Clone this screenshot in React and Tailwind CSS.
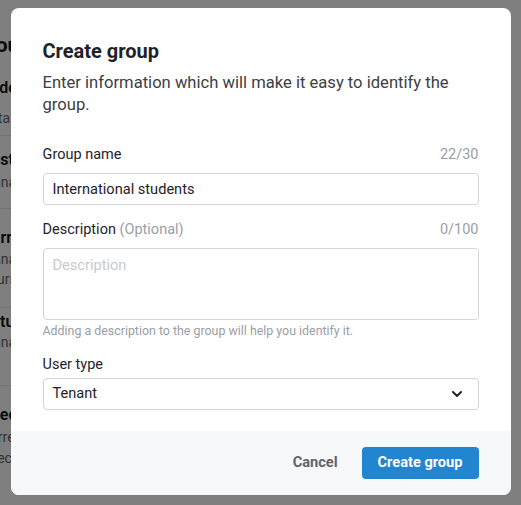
import React, { useState } from 'react';
import { ChevronDown } from 'lucide-react';

// group list on the page behind the dialog
const groups = [
  { name: 'Widespread', lines: ['Data'], box: 'pt-[20px] pb-[8px] gap-[11px]' },
  { name: 'Postgraduates', lines: ['Manager'], box: 'pt-[14px] pb-[17px] gap-[3px]' },
  { name: 'Current', lines: ['Manager', 'Yours'], box: 'pt-[19px] pb-[19px] gap-[2px]' },
  { name: 'Actual', lines: ['Manager'], box: 'pt-[4px] pb-[34px] gap-[1px]' },
  { name: 'Specific', lines: ['Current', 'Specific'], box: 'pt-[19px] gap-[3px] border-b-0' },
];

const Field = ({ label, hint, count, children, help, tight }) => (
  <div className="flex flex-col">
    <div className={`flex items-end justify-between ${tight ? 'mb-[4px]' : 'mb-[9px]'}`}>
      <span className="text-[14.5px] leading-[18px] text-[#1f2328]">
        {label}
        {hint && <span className="text-[#9aa0a6]"> {hint}</span>}
      </span>
      {count && <span className="text-[14.5px] leading-[18px] text-[#9aa0a6]">{count}</span>}
    </div>
    {children}
    {help && <p className="mt-[3px] text-[12.4px] leading-[16px] text-[#9aa0a6]">{help}</p>}
  </div>
);

export default function App() {
  const [name, setName] = useState('International students');
  const [description, setDescription] = useState('');

  return (
    <div
      className="relative w-[521px] h-[505px] overflow-hidden bg-white"
      style={{ fontFamily: 'Roboto, "Liberation Sans", sans-serif' }}
    >
      <div className="-ml-[19px] w-[200px] pt-[32px] flex flex-col text-[#111]">
        <h2 className="-ml-[7px] text-[21px] font-bold leading-[26px]">Groups</h2>
        {groups.map((g) => (
          <div key={g.name} className={`flex flex-col border-b border-[#e6e6e6] ${g.box}`}>
            <p className="text-[16px] font-semibold leading-[20px]">{g.name}</p>
            {g.lines.map((l, j) => (
              <p key={j} className="text-[14px] leading-[18px] text-[#666]">{l}</p>
            ))}
          </div>
        ))}
      </div>

      {/* dimmer + dialog */}
      <div className="absolute inset-0 bg-black/50 flex items-start justify-center pt-[8px]">
        <div className="w-[500px] h-[487px] bg-white rounded-[8px] overflow-hidden flex flex-col">
          <div className="flex-1 px-[32px] pt-[30px]">
            <h1 className="text-[20px] leading-[26px] font-bold text-[#1f2328]">Create group</h1>
            <p className="mt-[8px] text-[16.6px] leading-[22px] text-[#3c4043]">
              Enter information which will make it easy to identify the group.
            </p>

            <div className="mt-[30px] flex flex-col gap-[16px]">
              <Field label="Group name" count={`${name.length}/30`}>
                <input
                  value={name}
                  onChange={(e) => setName(e.target.value)}
                  className="h-[32px] w-full rounded-[4px] border border-[#d4d4d5] px-[9px] text-[14.6px] text-[#1f2328] outline-none"
                />
              </Field>

              <Field
                label="Description"
                hint="(Optional)"
                count={`${description.length}/100`}
                help="Adding a description to the group will help you identify it."
              >
                <textarea
                  value={description}
                  onChange={(e) => setDescription(e.target.value)}
                  placeholder="Description"
                  className="h-[72px] w-full resize-none rounded-[4px] border border-[#d4d4d5] px-[9px] py-[6px] text-[14.6px] leading-[20px] text-[#1f2328] placeholder:text-[#c8cacd] outline-none"
                />
              </Field>

              <div className="mt-[1px]">
                <Field label="User type" tight>
                  <button className="h-[32px] w-full rounded-[4px] border border-[#d4d4d5] px-[9px] flex items-center justify-between text-[14.6px] text-[#1f2328]">
                    <span>Tenant</span>
                    <ChevronDown size={16} strokeWidth={3} className="mr-[4px] text-[#222]" />
                  </button>
                </Field>
              </div>
            </div>
          </div>

          <div className="h-[64px] bg-[#f7f8fa] px-[32px] flex items-center justify-end gap-[24px]">
            <button className="text-[14.6px] font-bold text-[#60646a]">Cancel</button>
            <button className="h-[32px] px-[16px] rounded-[4px] bg-[#2185d0] text-white text-[14.6px] font-bold">
              Create group
            </button>
          </div>
        </div>
      </div>
    </div>
  );
}
